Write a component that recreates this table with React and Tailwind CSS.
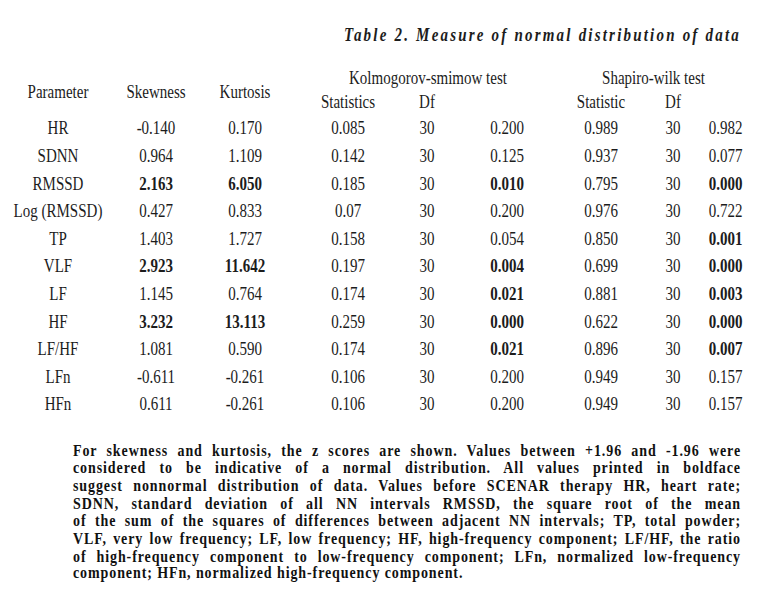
import React from "react";

const rows = [
  ["HR", ["-0.140"], ["0.170"], ["0.085"], ["30"], ["0.200"], ["0.989"], ["30"], ["0.982"]],
  ["SDNN", ["0.964"], ["1.109"], ["0.142"], ["30"], ["0.125"], ["0.937"], ["30"], ["0.077"]],
  ["RMSSD", ["2.163", 1], ["6.050", 1], ["0.185"], ["30"], ["0.010", 1], ["0.795"], ["30"], ["0.000", 1]],
  ["Log (RMSSD)", ["0.427"], ["0.833"], ["0.07"], ["30"], ["0.200"], ["0.976"], ["30"], ["0.722"]],
  ["TP", ["1.403"], ["1.727"], ["0.158"], ["30"], ["0.054"], ["0.850"], ["30"], ["0.001", 1]],
  ["VLF", ["2.923", 1], ["11.642", 1], ["0.197"], ["30"], ["0.004", 1], ["0.699"], ["30"], ["0.000", 1]],
  ["LF", ["1.145"], ["0.764"], ["0.174"], ["30"], ["0.021", 1], ["0.881"], ["30"], ["0.003", 1]],
  ["HF", ["3.232", 1], ["13.113", 1], ["0.259"], ["30"], ["0.000", 1], ["0.622"], ["30"], ["0.000", 1]],
  ["LF/HF", ["1.081"], ["0.590"], ["0.174"], ["30"], ["0.021", 1], ["0.896"], ["30"], ["0.007", 1]],
  ["LFn", ["-0.611"], ["-0.261"], ["0.106"], ["30"], ["0.200"], ["0.949"], ["30"], ["0.157"]],
  ["HFn", ["0.611"], ["-0.261"], ["0.106"], ["30"], ["0.200"], ["0.949"], ["30"], ["0.157"]],
];

const notes = [
  "For skewness and kurtosis, the z scores are shown. Values between +1.96 and -1.96 were",
  "considered to be indicative of a normal distribution. All values printed in boldface",
  "suggest nonnormal distribution of data. Values before SCENAR therapy HR, heart rate;",
  "SDNN, standard deviation of all NN intervals RMSSD, the square root of the mean",
  "of the sum of the squares of differences between adjacent NN intervals; TP, total powder;",
  "VLF, very low frequency; LF, low frequency; HF, high-frequency component; LF/HF, the ratio",
  "of high-frequency component to low-frequency component; LFn, normalized low-frequency",
];

export default function App() {
  return (
    <div className="w-[762px] h-[595px] overflow-hidden bg-white">
      <div className="w-[762px] h-[496px] text-[#1c1c1c] origin-top-left scale-y-[1.2] font-['Liberation_Serif',serif]">
        <div className="pt-[21px] pr-[21px] flex justify-end">
          <h1 className="text-[15px] leading-[17px] font-bold italic tracking-[2.2px]">
            Table 2. Measure of normal distribution of data
          </h1>
        </div>

        <div className="mt-[18px] grid grid-cols-[116px_80px_98px_108px_50px_110px_78px_66px_39px] text-[15px] leading-[17px] text-center">
          <div className="row-span-2 flex items-center justify-center pt-[2px]">Parameter</div>
          <div className="row-span-2 flex items-center justify-center pt-[2px]">Skewness</div>
          <div className="row-span-2 flex items-center justify-center pt-[2px]">Kurtosis</div>
          <div className="col-span-3 h-[19.5px] flex items-center justify-center">Kolmogorov-smimow test</div>
          <div className="col-span-3 h-[19.5px] flex items-center justify-center">Shapiro-wilk test</div>
          <div className="h-[20.5px] flex items-center justify-center">Statistics</div>
          <div className="h-[20.5px] flex items-center justify-center">Df</div>
          <div className="h-[20.5px]"></div>
          <div className="h-[20.5px] flex items-center justify-center">Statistic</div>
          <div className="h-[20.5px] flex items-center justify-center">Df</div>
          <div className="h-[20.5px]"></div>

          {rows.map((r) => (
            <React.Fragment key={r[0]}>
              <div className="h-[23px] flex items-center justify-center whitespace-nowrap">{r[0]}</div>
              {r.slice(1).map((c, i) => (
                <div
                  key={i}
                  className={`h-[23px] flex items-center justify-center whitespace-nowrap ${c[1] ? "font-bold" : ""}`}
                >
                  {c[0]}
                </div>
              ))}
            </React.Fragment>
          ))}
        </div>

        <div className="mt-[19.5px] ml-[73px] w-[668px] text-[14px] leading-[14.67px] font-bold tracking-[0.9px] text-[#111]">
          {notes.map((n, i) => (
            <div key={i} className="text-justify [text-align-last:justify]">
              {n}
            </div>
          ))}
          <div>component; HFn, normalized high-frequency component.</div>
        </div>
      </div>
    </div>
  );
}
